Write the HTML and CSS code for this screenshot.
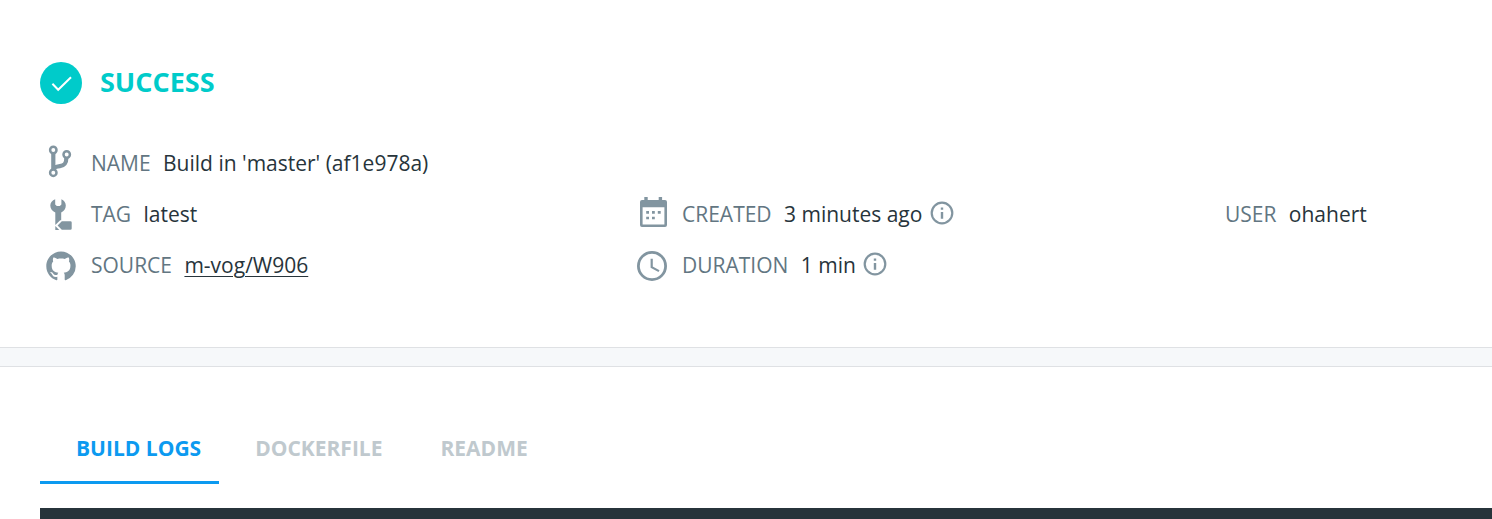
FILE: index.html
```html
<!DOCTYPE html>
<html lang="en">
<head>
<meta charset="utf-8">
<title>Build details</title>
<link rel="stylesheet" href="styles.css">
</head>
<body>
<section class="summary">
  <header class="status">
    <svg class="status-icon" viewBox="0 0 42 42"><circle cx="21" cy="21" r="21" fill="#00cbca"/><path d="M12.400 21.800l5.800 6L31 15.300" fill="none" stroke="#fff" stroke-width="2"/></svg>
    <h1 class="status-text">SUCCESS</h1>
  </header>
  <div class="details">
    <div class="item wide">
      <svg class="icon" viewBox="0 0 36 36"><g fill="none" stroke="#8295a0"><g stroke-width="2.500"><circle cx="10.300" cy="5" r="3.200"/><circle cx="23.700" cy="9.500" r="3.200"/><circle cx="10.300" cy="27.700" r="3.200"/></g><path d="M10.300 8v16.500M23.400 12.500c0 6.500-2.500 8.100-6.500 8.600-3.500.4-6 1-6.200 3.400" stroke-width="4.200"/></g></svg>
      <span class="label">NAME</span><span class="value">Build in 'master' (af1e978a)</span>
    </div>
    <div class="item">
      <svg class="icon" viewBox="0 0 36 36" fill="#8295a0"><path d="M12.200 3.300v5.200l1.600 1.500h3l1.600-1.500V3.300c2.600 1.100 4.400 3.400 4.400 6.200 0 3-1.800 5.700-4.600 7v7.700h-1L12.300 29V16.500C9.300 15.200 7.300 12.500 7.300 9.500c0-2.800 2-5.100 4.900-6.200zM12.300 30l4 4h-4zM18.800 25.300h8.600q1.300 0 1.300 1.300v5.900q0 1.300-1.300 1.300h-8.600L14.600 29.500z"/></svg>
      <span class="label">TAG</span><span class="value">latest</span>
    </div>
    <div class="item">
      <svg class="icon" viewBox="0 0 36 36"><g fill="#8295a0"><path d="M6 6q0-2 2-2h2.300V.9h3.400V4h11V.9h3.400V4H31q2 0 2 2v23q0 2-2 2H8q-2 0-2-2zm2.600 5.200v17.200h21.800V11.200z" fill-rule="evenodd"/><path d="M12.200 15H15v2.700h-2.800zM18 15h2.800v2.700H18zM23.800 15h2.900v2.700h-2.900zM12.200 20.700H15v2.600h-2.800zM18 20.700h2.800v2.600H18z"/></g></svg>
      <span class="label">CREATED</span><span class="value">3 minutes ago</span>
      <svg class="info" viewBox="0 0 24 24"><circle cx="12" cy="12" r="10.300" fill="none" stroke="#8295a0" stroke-width="2.200"/><path d="M10.800 6.500h2.400v2.300h-2.400zM10.800 11h2.400v6.700h-2.400z" fill="#8295a0"/></svg>
    </div>
    <div class="item"><span class="label">USER</span><span class="value">ohahert</span></div>
    <div class="item">
      <svg class="icon" viewBox="0 0 36 36"><path transform="translate(3.300 4.500) scale(1.840)" fill="#8295a0" d="M8 0C3.580 0 0 3.580 0 8c0 3.540 2.290 6.530 5.470 7.590.4.070.55-.17.55-.38 0-.19-.010-.82-.010-1.490-2.010.37-2.530-.49-2.690-.94-.09-.23-.48-.94-.82-1.130-.28-.15-.68-.52-.010-.53.63-.010 1.080.58 1.230.82.72 1.210 1.870.87 2.330.66.070-.52.28-.87.510-1.070-1.780-.2-3.640-.89-3.640-3.950 0-.87.310-1.590.82-2.150-.08-.2-.36-1.020.08-2.120 0 0 .67-.21 2.200.82.64-.18 1.320-.27 2-.27s1.360.09 2 .27c1.530-1.040 2.200-.82 2.200-.82.44 1.100.16 1.920.08 2.120.51.56.82 1.270.82 2.150 0 3.070-1.870 3.750-3.650 3.950.29.25.54.73.54 1.480 0 1.070-.010 1.930-.010 2.200 0 .21.15.46.55.38A8.010 8.010 0 0 0 16 8c0-4.420-3.580-8-8-8z"/></svg>
      <span class="label">SOURCE</span><a class="value link">m-vog/W906</a>
    </div>
    <div class="item">
      <svg class="icon" viewBox="0 0 36 36"><g fill="none" stroke="#8295a0"><circle cx="18" cy="19" r="13.600" stroke-width="2.800"/><path d="M17.700 11.800v8.300l7.300 4" stroke-width="2.200"/></g></svg>
      <span class="label">DURATION</span><span class="value">1 min</span>
      <svg class="info" viewBox="0 0 24 24"><circle cx="12" cy="12" r="10.300" fill="none" stroke="#8295a0" stroke-width="2.200"/><path d="M10.800 6.500h2.400v2.300h-2.400zM10.800 11h2.400v6.700h-2.400z" fill="#8295a0"/></svg>
    </div>
  </div>
</section>
<div class="divider"></div>
<section class="logs">
  <nav class="tabs">
    <a class="tab active">BUILD LOGS</a><a class="tab">DOCKERFILE</a><a class="tab">README</a>
  </nav>
  <div class="console"></div>
</section>
</body>
</html>
```
FILE: styles.css
```css
* { box-sizing: border-box; }
body {
  margin: 0;
  height: 519px;
  overflow: hidden;
  background: #fff;
  color: #27343b;
  font: 21px/30px "Open Sans", sans-serif;
}
.summary { height: 347px; padding: 62px 0 0 40px; }
.status { display: flex; align-items: center; gap: 18px; height: 42px; }
.status-icon { width: 42px; height: 42px; }
.status-text { margin: 0; font-size: 27px; font-weight: 700; line-height: 40px; padding-bottom: 2px; color: #00cbca; }
.details {
  display: grid;
  grid-template-columns: 591px 591px 270px;
  grid-auto-rows: 51px;
  margin-top: 33px;
}
.item { display: flex; align-items: center; padding-left: 3px; white-space: nowrap; }
.wide { grid-column: 1 / -1; }
.icon { flex: none; width: 36px; height: 36px; margin-right: 12px; }
.label { margin-right: 12.4px; color: #627682; }
.link { text-decoration: underline; text-decoration-thickness: 1px; text-underline-offset: 3px; }
.info { width: 24px; height: 24px; margin: 0 0 1px 7.5px; }
.divider { height: 20px; background: #f6f8fa; border: solid #dfe1e4; border-width: 1px 0; }
.logs { padding: 46px 0 0 40px; }
.tabs { display: flex; height: 71px; }
.tab { padding: 20px 18px 0 36px; margin-right: 4px; color: #c0c9ce; font-weight: 700; }
.active { color: #0c9af0; border-bottom: 3px solid #0c9af0; margin-right: 0; }
.console { height: 11px; margin-top: 24px; background: #27343b; }
```
